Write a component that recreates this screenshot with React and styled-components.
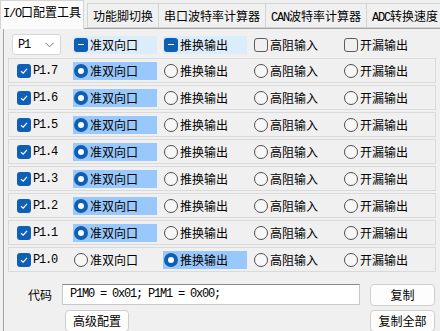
import styled, { createGlobalStyle } from "styled-components";

const GlobalStyle = createGlobalStyle`
  body {
    margin: 0;
    background: #f0f0f0;
    font-family: "Noto Sans CJK SC", "Noto Sans", sans-serif;
    color: #000;
  }
`;

const tabs = [
  { latin: "I/O", cjk: "口配置工具", active: true },
  { latin: "", cjk: "功能脚切换" },
  { latin: "", cjk: "串口波特率计算器" },
  { latin: "CAN", cjk: "波特率计算器" },
  { latin: "ADC", cjk: "转换速度" },
];

const modes = ["准双向口", "推换输出", "高阻输入", "开漏输出"];
const pins = [
  { name: "P1.7", mode: 0 },
  { name: "P1.6", mode: 0 },
  { name: "P1.5", mode: 0 },
  { name: "P1.4", mode: 0 },
  { name: "P1.3", mode: 0 },
  { name: "P1.2", mode: 0 },
  { name: "P1.1", mode: 0 },
  { name: "P1.0", mode: 1 },
];

function CheckMark({ state }) {
  if (state === "off") return <EmptyBox />;
  return (
    <BlueBox>
      {state === "on" ? (
        <svg width="10" height="10" viewBox="0 0 10 10">
          <path d="M2 5.2 L4.2 7.2 L8 2.8" fill="none" stroke="#fff" strokeWidth="1.2" />
        </svg>
      ) : (
        <Dash />
      )}
    </BlueBox>
  );
}

function Radio({ on }) {
  return on ? (
    <RadioOn>
      <Dot />
    </RadioOn>
  ) : (
    <RadioOff />
  );
}

export default function App() {
  return (
    <Window>
      <GlobalStyle />
      <TabBar>
        {tabs.map((t) => (
          <Tab key={t.cjk} $active={t.active}>
            {t.latin && <Latin>{t.latin}</Latin>}
            {t.cjk}
          </Tab>
        ))}
      </TabBar>
      <Panel>
        <Header>
          <Select>
            <Latin>P1</Latin>
            <svg width="9" height="6" viewBox="0 0 9 6">
              <path d="M0.5 0.8 L4.5 4.8 L8.5 0.8" fill="none" stroke="#777" strokeWidth="1" />
            </svg>
          </Select>
          {modes.map((m, i) => (
            <Option key={m} $tone={i < 2 ? "light" : "none"}>
              <CheckMark state={i < 2 ? "mixed" : "off"} />
              {m}
            </Option>
          ))}
        </Header>
        <Rows>
          {pins.map((p) => (
            <Row key={p.name}>
              <PinToggle>
                <CheckMark state="on" />
                <PinName>{p.name}</PinName>
              </PinToggle>
              {modes.map((m, i) => (
                <Option key={m} $tone={p.mode === i ? "strong" : "none"}>
                  <Radio on={p.mode === i} />
                  {m}
                </Option>
              ))}
            </Row>
          ))}
        </Rows>
        <Footer>
          <Label>代码</Label>
          <CodeBox>P1M0 = 0x01; P1M1 = 0x00;</CodeBox>
          <Button>复制</Button>
          <span />
          <Button $indent>高级配置</Button>
          <Button>复制全部</Button>
        </Footer>
      </Panel>
    </Window>
  );
}

const Window = styled.div`
  width: 440px;
  height: 331px;
  overflow: hidden;
  font-size: 12px;
`;

const TabBar = styled.div`
  display: flex;
  align-items: flex-end;
  height: 28px;
`;

const Tab = styled.div`
  position: relative;
  z-index: ${(p) => (p.$active ? 1 : 0)};
  flex-shrink: 0;
  box-sizing: border-box;
  height: ${(p) => (p.$active ? "29px" : "25px")};
  margin-bottom: ${(p) => (p.$active ? "-1px" : "0")};
  margin-right: ${(p) => (p.$active ? "3px" : "-1px")};
  padding: ${(p) => (p.$active ? "3px 2px 0" : "4px 5px 0")};
  background: ${(p) => (p.$active ? "#fbfbfb" : "#f0f0f0")};
  border: 1px solid #d4d4d4;
  border-bottom: ${(p) => (p.$active ? "none" : "1px solid #d4d4d4")};
  line-height: 16px;
  white-space: nowrap;
`;

const Latin = styled.span`
  font-family: "Liberation Mono", monospace;
  font-size: 12px;
  letter-spacing: -1.2px;
`;

const Panel = styled.div`
  box-sizing: border-box;
  margin-left: 3px;
  width: 470px;
  height: 320px;
  border: 1px solid #a5a5a5;
  padding: 5px 0 0 0;
`;

const Header = styled.div`
  display: flex;
  align-items: center;
  height: 21px;
  padding-left: 8px;
`;

const Select = styled.div`
  box-sizing: border-box;
  width: 49px;
  height: 21px;
  margin-right: 12px;
  display: flex;
  align-items: center;
  justify-content: space-between;
  padding: 0 6px 0 5px;
  background: #fff;
  border: 1px solid #d6d6d6;
  border-radius: 3px;
`;

const Option = styled.div`
  flex-shrink: 0;
  display: flex;
  align-items: center;
  gap: 2px;
  width: 84px;
  height: 18px;
  margin-right: 6px;
  padding-left: 1px;
  box-sizing: border-box;
  line-height: 18px;
  background: ${(p) =>
    p.$tone === "strong" ? "#99c9fc" : p.$tone === "light" ? "#dbecfb" : "transparent"};
`;

const BlueBox = styled.span`
  flex-shrink: 0;
  width: 14px;
  height: 14px;
  border-radius: 3px;
  background: #0f5fb6;
  display: flex;
  align-items: center;
  justify-content: center;
`;

const Dash = styled.span`
  width: 6px;
  height: 1.5px;
  background: #fff;
`;

const EmptyBox = styled.span`
  flex-shrink: 0;
  box-sizing: border-box;
  width: 14px;
  height: 14px;
  border-radius: 3px;
  border: 1px solid #5c5c5c;
`;

const RadioOn = styled.span`
  flex-shrink: 0;
  width: 14px;
  height: 14px;
  border-radius: 50%;
  background: #0f5fb6;
  display: flex;
  align-items: center;
  justify-content: center;
`;

const Dot = styled.span`
  width: 6px;
  height: 6px;
  border-radius: 50%;
  background: #fff;
`;

const RadioOff = styled.span`
  flex-shrink: 0;
  box-sizing: border-box;
  width: 14px;
  height: 14px;
  border-radius: 50%;
  border: 1px solid #4f4f4f;
  background: #f7f7f7;
`;

const Rows = styled.div`
  display: flex;
  flex-direction: column;
  gap: 2px;
  margin: 3px 0 0 4px;
  width: 428px;
`;

const Row = styled.div`
  box-sizing: border-box;
  height: 25px;
  display: flex;
  align-items: center;
  padding-left: 8px;
  border: 1px solid #dadada;
`;

const PinToggle = styled.div`
  flex-shrink: 0;
  width: 56px;
  display: flex;
  align-items: center;
  gap: 2px;
`;

const PinName = styled(Latin)`
  padding-top: 1px;
`;

const Footer = styled.div`
  display: grid;
  grid-template-columns: 48px 298px 65px;
  grid-template-rows: 21px 21px;
  column-gap: 10px;
  row-gap: 5px;
  margin-top: 12px;
  align-items: center;
`;

const Label = styled.div`
  text-align: right;
  padding-right: 0;
`;

const CodeBox = styled.div`
  box-sizing: border-box;
  height: 21px;
  background: #fff;
  border: 1px solid #c8c8c8;
  border-top-color: #8a8a8a;
  padding-left: 7px;
  font-family: "Liberation Mono", monospace;
  font-size: 12px;
  letter-spacing: -1.2px;
  line-height: 19px;
`;

const Button = styled.div`
  box-sizing: border-box;
  height: 22px;
  width: ${(p) => (p.$indent ? "64px" : "65px")};
  margin-left: ${(p) => (p.$indent ? "3px" : "0")};
  background: #fdfdfd;
  border: 1px solid #cfcfcf;
  border-radius: 4px;
  text-align: center;
  line-height: 20px;
`;
